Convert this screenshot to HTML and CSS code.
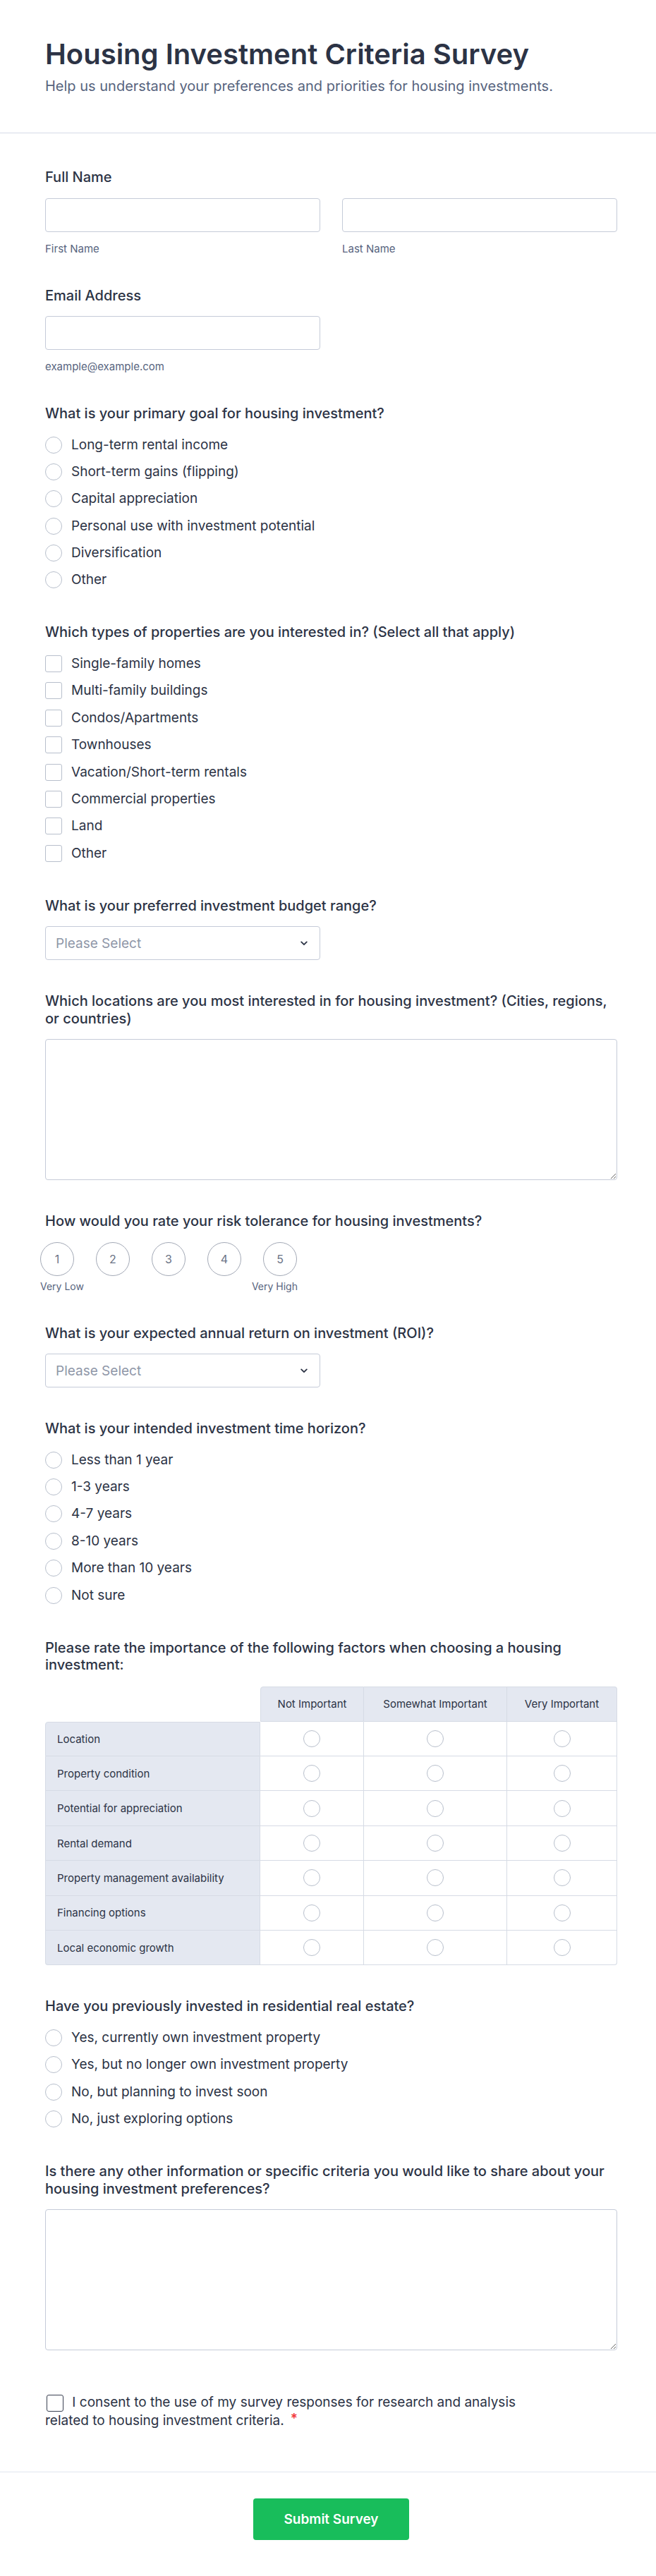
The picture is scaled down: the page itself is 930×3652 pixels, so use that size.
FILE: index.html
```html
<!DOCTYPE html>
<html lang="en">
<head>
<meta charset="utf-8">
<title>Housing Investment Criteria Survey</title>
<link rel="stylesheet" href="styles.css">
</head>
<body>
<header class="form-header">
  <h1 class="form-title">Housing Investment Criteria Survey</h1>
  <p class="form-subtitle">Help us understand your preferences and priorities for housing investments.</p>
</header>

<main class="form-body">
  <div class="field field-sub">
    <div class="label">Full Name</div>
    <div class="name-grid">
      <div>
        <input class="input" type="text">
        <div class="sublabel">First Name</div>
      </div>
      <div>
        <input class="input" type="text">
        <div class="sublabel">Last Name</div>
      </div>
    </div>
  </div>

  <div class="field field-sub">
    <div class="label">Email Address</div>
    <input class="input input-half" type="email">
    <div class="sublabel">example@example.com</div>
  </div>

  <div class="field field-choice">
    <div class="label">What is your primary goal for housing investment?</div>
    <div class="options">
      <label class="option"><input type="radio" name="goal" class="radio"><span>Long-term rental income</span></label>
      <label class="option"><input type="radio" name="goal" class="radio"><span>Short-term gains (flipping)</span></label>
      <label class="option"><input type="radio" name="goal" class="radio"><span>Capital appreciation</span></label>
      <label class="option"><input type="radio" name="goal" class="radio"><span>Personal use with investment potential</span></label>
      <label class="option"><input type="radio" name="goal" class="radio"><span>Diversification</span></label>
      <label class="option"><input type="radio" name="goal" class="radio"><span>Other</span></label>
    </div>
  </div>

  <div class="field field-choice">
    <div class="label">Which types of properties are you interested in? (Select all that apply)</div>
    <div class="options">
      <label class="option"><input type="checkbox" class="check"><span>Single-family homes</span></label>
      <label class="option"><input type="checkbox" class="check"><span>Multi-family buildings</span></label>
      <label class="option"><input type="checkbox" class="check"><span>Condos/Apartments</span></label>
      <label class="option"><input type="checkbox" class="check"><span>Townhouses</span></label>
      <label class="option"><input type="checkbox" class="check"><span>Vacation/Short-term rentals</span></label>
      <label class="option"><input type="checkbox" class="check"><span>Commercial properties</span></label>
      <label class="option"><input type="checkbox" class="check"><span>Land</span></label>
      <label class="option"><input type="checkbox" class="check"><span>Other</span></label>
    </div>
  </div>

  <div class="field">
    <div class="label">What is your preferred investment budget range?</div>
    <div class="select">
      <span class="select-text">Please Select</span>
      <svg class="chevron" width="10" height="7" viewBox="0 0 10 7" aria-hidden="true"><path d="M1.2 1.4 L5 5.2 L8.8 1.4" fill="none" stroke="#2c3345" stroke-width="1.8" stroke-linecap="round" stroke-linejoin="round"/></svg>
    </div>
  </div>

  <div class="field">
    <div class="label">Which locations are you most interested in for housing investment? (Cities, regions, or countries)</div>
    <textarea class="textarea"></textarea>
  </div>

  <div class="field field-sub">
    <div class="label">How would you rate your risk tolerance for housing investments?</div>
    <div class="scale">
      <span class="scale-item">1</span>
      <span class="scale-item">2</span>
      <span class="scale-item">3</span>
      <span class="scale-item">4</span>
      <span class="scale-item">5</span>
    </div>
    <div class="scale-labels"><span>Very Low</span><span>Very High</span></div>
  </div>

  <div class="field">
    <div class="label">What is your expected annual return on investment (ROI)?</div>
    <div class="select">
      <span class="select-text">Please Select</span>
      <svg class="chevron" width="10" height="7" viewBox="0 0 10 7" aria-hidden="true"><path d="M1.2 1.4 L5 5.2 L8.8 1.4" fill="none" stroke="#2c3345" stroke-width="1.8" stroke-linecap="round" stroke-linejoin="round"/></svg>
    </div>
  </div>

  <div class="field field-choice">
    <div class="label">What is your intended investment time horizon?</div>
    <div class="options">
      <label class="option"><input type="radio" name="horizon" class="radio"><span>Less than 1 year</span></label>
      <label class="option"><input type="radio" name="horizon" class="radio"><span>1-3 years</span></label>
      <label class="option"><input type="radio" name="horizon" class="radio"><span>4-7 years</span></label>
      <label class="option"><input type="radio" name="horizon" class="radio"><span>8-10 years</span></label>
      <label class="option"><input type="radio" name="horizon" class="radio"><span>More than 10 years</span></label>
      <label class="option"><input type="radio" name="horizon" class="radio"><span>Not sure</span></label>
    </div>
  </div>

  <div class="field">
    <div class="label label-matrix">Please rate the importance of the following factors when choosing a housing investment:</div>
    <div class="matrix">
      <div class="m-corner"></div>
      <div class="m-head m-head-first">Not Important</div>
      <div class="m-head">Somewhat Important</div>
      <div class="m-head m-head-last">Very Important</div>

      <div class="m-row m-row-first">Location</div>
      <div class="m-cell"><input type="radio" name="m1" class="radio"></div>
      <div class="m-cell"><input type="radio" name="m1" class="radio"></div>
      <div class="m-cell"><input type="radio" name="m1" class="radio"></div>

      <div class="m-row">Property condition</div>
      <div class="m-cell"><input type="radio" name="m2" class="radio"></div>
      <div class="m-cell"><input type="radio" name="m2" class="radio"></div>
      <div class="m-cell"><input type="radio" name="m2" class="radio"></div>

      <div class="m-row">Potential for appreciation</div>
      <div class="m-cell"><input type="radio" name="m3" class="radio"></div>
      <div class="m-cell"><input type="radio" name="m3" class="radio"></div>
      <div class="m-cell"><input type="radio" name="m3" class="radio"></div>

      <div class="m-row">Rental demand</div>
      <div class="m-cell"><input type="radio" name="m4" class="radio"></div>
      <div class="m-cell"><input type="radio" name="m4" class="radio"></div>
      <div class="m-cell"><input type="radio" name="m4" class="radio"></div>

      <div class="m-row">Property management availability</div>
      <div class="m-cell"><input type="radio" name="m5" class="radio"></div>
      <div class="m-cell"><input type="radio" name="m5" class="radio"></div>
      <div class="m-cell"><input type="radio" name="m5" class="radio"></div>

      <div class="m-row">Financing options</div>
      <div class="m-cell"><input type="radio" name="m6" class="radio"></div>
      <div class="m-cell"><input type="radio" name="m6" class="radio"></div>
      <div class="m-cell"><input type="radio" name="m6" class="radio"></div>

      <div class="m-row m-row-last">Local economic growth</div>
      <div class="m-cell"><input type="radio" name="m7" class="radio"></div>
      <div class="m-cell"><input type="radio" name="m7" class="radio"></div>
      <div class="m-cell m-cell-last"><input type="radio" name="m7" class="radio"></div>
    </div>
  </div>

  <div class="field field-choice">
    <div class="label">Have you previously invested in residential real estate?</div>
    <div class="options">
      <label class="option"><input type="radio" name="prev" class="radio"><span>Yes, currently own investment property</span></label>
      <label class="option"><input type="radio" name="prev" class="radio"><span>Yes, but no longer own investment property</span></label>
      <label class="option"><input type="radio" name="prev" class="radio"><span>No, but planning to invest soon</span></label>
      <label class="option"><input type="radio" name="prev" class="radio"><span>No, just exploring options</span></label>
    </div>
  </div>

  <div class="field">
    <div class="label">Is there any other information or specific criteria you would like to share about your housing investment preferences?</div>
    <textarea class="textarea"></textarea>
  </div>

  <div class="consent">
    <input type="checkbox" class="consent-box" id="consent">
    <label class="consent-text" for="consent">I consent to the use of my survey responses for research and analysis</label><br><label class="consent-text" for="consent">related to housing investment criteria.</label><span class="req">*</span>
  </div>
</main>

<footer class="form-footer">
  <button class="submit" type="button">Submit Survey</button>
</footer>
</body>
</html>
```

FILE: styles.css
```css
* {
  box-sizing: border-box;
}

body {
  margin: 0;
  background: #ffffff;
  color: #2c3345;
  font-family: Inter, "Noto Sans", "Liberation Sans", sans-serif;
}

.form-header {
  padding: 53px 55px 52px 64px;
  border-bottom: 1px solid #d5dbe7;
}

.form-title {
  margin: 0;
  font-size: 40px;
  line-height: 48px;
  font-weight: 600;
  color: #2c3345;
}

.form-subtitle {
  margin: 7px 0 0;
  font-size: 20px;
  line-height: 28px;
  color: #57647e;
}

.form-body {
  padding: 50px 55px 59px 64px;
}

.field {
  margin-bottom: 46px;
}

.field-sub {
  margin-bottom: 45px;
}

.field-choice {
  margin-bottom: 50px;
}

.label {
  font-size: 20px;
  line-height: 24.5px;
  font-weight: 500;
  color: #2c3345;
  margin-bottom: 17px;
}

.field-choice .label {
  margin-bottom: 20px;
}

.label-matrix {
  margin-bottom: 18px;
}

.name-grid {
  display: grid;
  grid-template-columns: 1fr 1fr;
  column-gap: 31px;
}

.input {
  display: block;
  width: 100%;
  height: 48px;
  margin: 0;
  border: 1px solid #c5cbd8;
  border-radius: 4px;
  background: #fff;
  font: inherit;
}

.input-half {
  width: 390px;
}

.sublabel {
  margin-top: 15px;
  font-size: 15px;
  line-height: 18px;
  color: #57647e;
}

.options {
  display: flex;
  flex-direction: column;
  gap: 14.4px;
}

.option {
  display: flex;
  align-items: center;
  gap: 13px;
  height: 24px;
  font-size: 19px;
  line-height: 24px;
  color: #2c3345;
}

.radio,
.check {
  appearance: none;
  -webkit-appearance: none;
  flex: none;
  width: 24px;
  height: 24px;
  margin: 0;
  border: 1px solid #b8bfcc;
  background: #fff;
}

.radio {
  border-radius: 50%;
}

.check {
  border-radius: 3px;
}

.select {
  position: relative;
  display: flex;
  align-items: center;
  width: 390px;
  height: 48px;
  padding-left: 14px;
  border: 1px solid #c5cbd8;
  border-radius: 4px;
  background: #fff;
}

.select-text {
  font-size: 19px;
  color: #8f97a8;
}

.chevron {
  position: absolute;
  right: 17px;
  top: 20px;
}

.textarea {
  display: block;
  width: 100%;
  height: 200px;
  margin: 0;
  border: 1px solid #c5cbd8;
  border-radius: 4px;
  background: #fff;
  font: inherit;
  resize: vertical;
}

.scale {
  display: flex;
  gap: 31px;
  margin-left: -7px;
}

.scale-item {
  display: flex;
  align-items: center;
  justify-content: center;
  width: 48px;
  height: 48px;
  border: 1px solid #a3a9b6;
  border-radius: 50%;
  font-size: 16px;
  color: #6b7386;
}

.scale-labels {
  display: flex;
  justify-content: space-between;
  width: 365px;
  margin-left: -7px;
  margin-top: 6px;
  font-size: 14px;
  line-height: 18px;
  color: #57647e;
}

.matrix {
  display: grid;
  grid-template-columns: 305px 147px 203px 156px;
  grid-template-rows: 50px repeat(7, 49.4px);
  font-size: 15px;
  color: #2c3345;
}

.matrix > div {
  display: flex;
  align-items: center;
  border-right: 1px solid #d6dbe5;
  border-bottom: 1px solid #d6dbe5;
}

.matrix > .m-corner {
  border: none;
}

.m-head {
  justify-content: center;
  text-align: center;
  background: #e4e8f1;
  border-top: 1px solid #d6dbe5;
}

.m-head-first {
  border-left: 1px solid #d6dbe5;
  border-top-left-radius: 4px;
}

.m-head-last {
  border-top-right-radius: 4px;
}

.m-row {
  padding-left: 16px;
  background: #e4e8f1;
  border-left: 1px solid #d6dbe5;
}

.m-row-first {
  border-top: 1px solid #d6dbe5;
  border-top-left-radius: 4px;
}

.m-row-last {
  border-bottom-left-radius: 4px;
}

.m-cell {
  justify-content: center;
  background: #fff;
}

.m-cell-last {
  border-bottom-right-radius: 4px;
}

.consent {
  max-width: 720px;
  margin-top: 61px;
  font-size: 19px;
  line-height: 26px;
  color: #2c3345;
}

.consent-box {
  appearance: none;
  -webkit-appearance: none;
  display: inline-block;
  width: 24px;
  height: 24px;
  margin: 0 7px 0 2px;
  vertical-align: -7px;
  border: 1px solid #3a4152;
  border-radius: 3px;
  background: #fff;
}

.req {
  display: inline-block;
  margin-left: 9px;
  color: #f23a3c;
  font-size: 19px;
  font-weight: 600;
  line-height: 20px;
  vertical-align: top;
}

.form-footer {
  display: flex;
  justify-content: center;
  padding: 37px 55px 50px 64px;
  border-top: 1px solid #e1e5ee;
}

.submit {
  height: 59px;
  padding: 0 43px;
  border: none;
  border-radius: 4px;
  background: #18bd5b;
  color: #ffffff;
  font-family: Inter, "Noto Sans", sans-serif;
  font-size: 19px;
  font-weight: 600;
}
```
